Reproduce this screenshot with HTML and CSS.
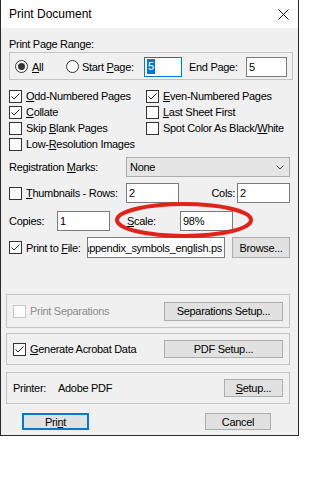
FILE: index.html
```html
<!DOCTYPE html>
<html>
<head>
<meta charset="utf-8">
<title>Print Document</title>
<link rel="stylesheet" href="styles.css">
</head>
<body>
<div class="window">
  <div class="titlebar">
    <span class="title">Print Document</span>
    <svg class="close" width="11" height="11" viewBox="0 0 11 11"><path d="M0.5 0.5L10.5 10.5M10.5 0.5L0.5 10.5" stroke="#111" stroke-width="1" fill="none"/></svg>
  </div>
  <div class="content">
    <div class="section-label">Print Page Range:</div>
    <div class="range-box">
      <div class="opt opt-all"><span class="radio checked"></span><span><u>A</u>ll</span></div>
      <div class="opt opt-start"><span class="radio"></span><span>Start <u>P</u>age:</span></div>
      <div class="field field-focus w-start"><span class="sel">5</span></div>
      <span class="lbl-end">End Page:</span>
      <div class="field w-end">5</div>
    </div>
    <div class="checks">
      <div class="chk-item"><span class="chk on"><svg width="11" height="11" viewBox="0 0 11 11"><path d="M1.5 5.5L4 8L9.5 2.5" stroke="#222" stroke-width="1" fill="none"/></svg></span><span><u>O</u>dd-Numbered Pages</span></div>
      <div class="chk-item"><span class="chk on"><svg width="11" height="11" viewBox="0 0 11 11"><path d="M1.5 5.5L4 8L9.5 2.5" stroke="#222" stroke-width="1" fill="none"/></svg></span><span><u>E</u>ven-Numbered Pages</span></div>
      <div class="chk-item"><span class="chk on"><svg width="11" height="11" viewBox="0 0 11 11"><path d="M1.5 5.5L4 8L9.5 2.5" stroke="#222" stroke-width="1" fill="none"/></svg></span><span><u>C</u>ollate</span></div>
      <div class="chk-item"><span class="chk"></span><span><u>L</u>ast Sheet First</span></div>
      <div class="chk-item"><span class="chk"></span><span>Skip <u>B</u>lank Pages</span></div>
      <div class="chk-item"><span class="chk"></span><span>Spot Color As Black/<u>W</u>hite</span></div>
      <div class="chk-item"><span class="chk"></span><span>Low-<u>R</u>esolution Images</span></div>
    </div>
    <div class="row row-reg">
      <span class="cell w117">Registration <u>M</u>arks:</span>
      <div class="combo"><span>None</span><svg width="8" height="5" viewBox="0 0 8 5"><path d="M0.5 0.5L4 4L7.5 0.5" stroke="#444" stroke-width="1" fill="none"/></svg></div>
    </div>
    <div class="row row-thumb">
      <div class="chk-item cell w117"><span class="chk"></span><span><u>T</u>humbnails - Rows:</span></div>
      <div class="field w53">2</div>
      <span class="cell w58 right">Cols:</span>
      <div class="field w53">2</div>
    </div>
    <div class="row row-copies">
      <span class="cell w48">Copies:</span>
      <div class="field w53">1</div>
      <span class="cell w53 scale-lbl"><u>S</u>cale:</span>
      <div class="field w53">98%</div>
    </div>
    <div class="row row-file">
      <div class="chk-item cell w78"><span class="chk on"><svg width="11" height="11" viewBox="0 0 11 11"><path d="M1.5 5.5L4 8L9.5 2.5" stroke="#222" stroke-width="1" fill="none"/></svg></span><span>Print to <u>F</u>ile:</span></div>
      <div class="field file-field"><span class="file-text">appendix_symbols_english.ps</span></div>
      <div class="btn browse">Browse...</div>
    </div>
    <div class="group group-sep">
      <div class="chk-item disabled"><span class="chk"></span><span>Print Separations</span></div>
      <div class="btn btn-wide">Separations Setup...</div>
    </div>
    <div class="group group-pdf">
      <div class="chk-item"><span class="chk on"><svg width="11" height="11" viewBox="0 0 11 11"><path d="M1.5 5.5L4 8L9.5 2.5" stroke="#222" stroke-width="1" fill="none"/></svg></span><span><u>G</u>enerate Acrobat Data</span></div>
      <div class="btn btn-wide btn-pdf">PDF Setup...</div>
    </div>
    <div class="group group-printer">
      <span class="cell w45">Printer:</span>
      <span>Adobe PDF</span>
      <div class="btn btn-setup"><u>S</u>etup...</div>
    </div>
    <div class="row row-buttons">
      <div class="btn btn-print">Pri<u>n</u>t</div>
      <div class="btn btn-cancel">Cancel</div>
    </div>
  </div>
  <svg class="annotation" width="140" height="38" viewBox="0 0 140 38"><ellipse cx="70" cy="19" rx="67" ry="16" stroke="#e2231a" stroke-width="4" fill="none"/></svg>
</div>
</body>
</html>
```

FILE: styles.css
```css
* { box-sizing: border-box; }
html, body { margin: 0; padding: 0; background: #ffffff; }
body {
  font-family: "Liberation Sans", Arial, sans-serif;
  font-size: 11px;
  letter-spacing: -0.3px;
  color: #000;
  line-height: 14px;
}
u { text-decoration: underline; text-decoration-thickness: 1px; text-underline-offset: 1px; }

.window {
  position: relative;
  width: 299px;
  height: 436px;
  border: 1px solid #2a2a2a;
  border-top: none;
  background: #f0f0f0;
  display: flex;
  flex-direction: column;
}
.titlebar {
  height: 28px;
  flex: none;
  background: #ffffff;
  display: flex;
  align-items: center;
  justify-content: space-between;
  padding: 0 9px 0 8px;
}
.title { font-size: 12px; letter-spacing: 0; line-height: 28px; }
.close { display: block; }

.content { display: flex; flex-direction: column; flex: 1; }

.section-label { margin: 9px 0 1px 8px; height: 14px; }

.range-box {
  margin-left: 8px;
  width: 284px;
  height: 28px;
  border: 1px solid #c4c4c4;
  display: flex;
  align-items: center;
  padding: 1px 0 0 5px;
}
.opt { display: flex; align-items: center; gap: 4px; flex: none; }
.opt-all { width: 51px; }
.opt-start { width: 78px; gap: 3px; }
.radio {
  position: relative;
  width: 13px; height: 13px;
  border: 1px solid #333;
  border-radius: 50%;
  background: #fff;
  flex: none;
}
.radio.checked::after {
  content: "";
  position: absolute;
  left: 2px; top: 2px;
  width: 7px; height: 7px;
  border-radius: 50%;
  background: #333;
}
.lbl-end { margin-left: 7px; width: 57px; flex: none; }

.field {
  height: 20px;
  border: 1px solid #7a7a7a;
  background: #fff;
  display: flex;
  align-items: center;
  padding: 0 2px;
  flex: none;
  overflow: hidden;
  white-space: nowrap;
}
.field-focus { border-color: #0078d7; }
.w-start { width: 38px; }
.w-end { width: 41px; }
.w53 { width: 53px; }
.sel { background: #0078d7; color: #fff; line-height: 15px; padding: 0 1px; }

.checks {
  margin: 8px 0 0 8px;
  display: grid;
  grid-template-columns: 137px 1fr;
  grid-auto-rows: 16px;
}
.chk-item { display: flex; align-items: center; gap: 4px; white-space: nowrap; }
.chk {
  width: 13px; height: 13px;
  border: 1px solid #333;
  background: #fff;
  flex: none;
  display: flex;
}
.chk svg { display: block; }
.disabled { color: #8d8d8d; }
.disabled .chk { border-color: #c8c8c8; }

.row { display: flex; align-items: center; margin-left: 8px; flex: none; }
.cell { flex: none; }
.w117 { width: 117px; }
.w58 { width: 58px; }
.w48 { width: 48px; }
.w45 { width: 45px; }
.w78 { width: 78px; }
.right { text-align: right; padding-right: 2px; }

.row-reg { margin-top: 5px; height: 20px; }
.combo {
  width: 164px;
  height: 20px;
  background: #e5e5e5;
  border: 1px solid #adadad;
  display: flex;
  align-items: center;
  justify-content: space-between;
  padding: 0 5px 0 3px;
}
.combo svg { display: block; }

.row-thumb { margin-top: 6px; height: 20px; }
.row-copies { margin-top: 8px; height: 20px; }
.scale-lbl { margin-left: 17px; }
.row-file { margin-top: 6px; height: 21px; }
.file-field { width: 138px; height: 21px; justify-content: flex-end; padding-right: 2px; }
.file-text { flex: none; }

.btn {
  height: 20px;
  background: #e1e1e1;
  border: 1px solid #adadad;
  display: flex;
  align-items: center;
  justify-content: center;
  flex: none;
  white-space: nowrap;
}
.browse { width: 58px; height: 21px; margin-left: 7px; }

.group {
  margin-left: 5px;
  width: 284px;
  border: 1px solid #c4c4c4;
  display: flex;
  align-items: center;
  padding-left: 6px;
  flex: none;
}
.group .btn { margin-left: auto; margin-right: 6px; }
.group-sep { margin-top: 36px; height: 34px; }
.group-pdf { margin-top: 5px; height: 32px; }
.group-printer { margin-top: 7px; height: 32px; }
.btn-wide { width: 119px; height: 19px; }
.btn-pdf { height: 18px; }
.btn-setup { width: 59px; height: 18px; }

.row-buttons { margin-top: 9px; height: 17px; margin-left: 0; }
.btn-print { margin-left: 21px; width: 67px; height: 17px; border: 2px solid #0078d7; }
.btn-cancel { margin-left: 116px; width: 66px; height: 17px; }

.annotation { position: absolute; left: 113px; top: 201px; display: block; }
```
